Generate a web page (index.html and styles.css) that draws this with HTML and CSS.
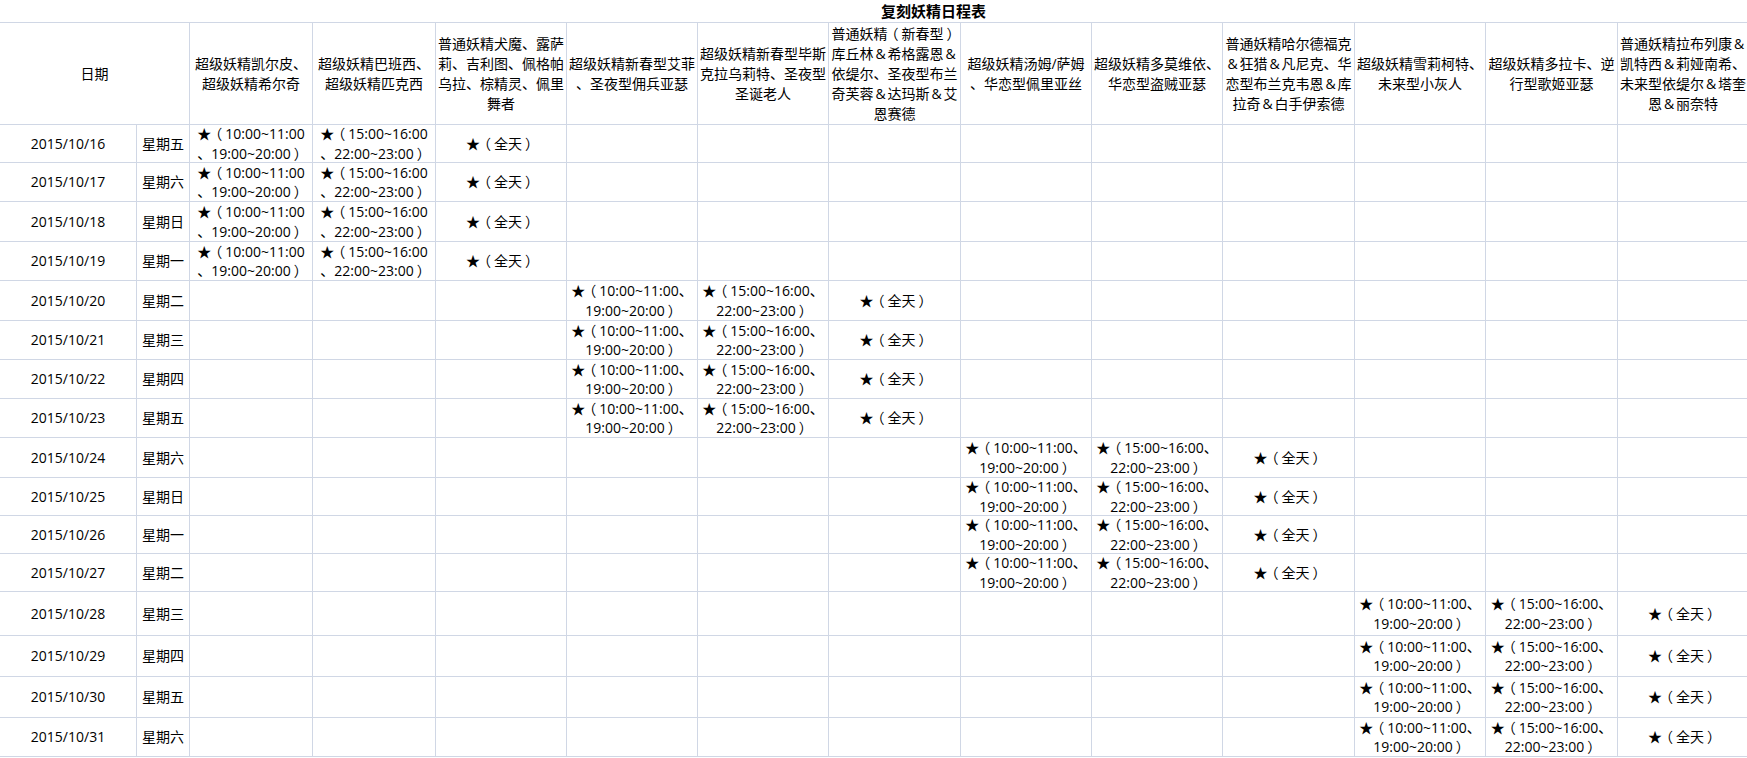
FILE: index.html
```html
<!DOCTYPE html>
<html lang="zh-CN">
<head>
<meta charset="utf-8">
<title>复刻妖精日程表</title>
<link rel="stylesheet" href="styles.css">
</head>
<body>
<div class="sheet">
  <div class="title">复刻妖精日程表</div>

  <div class="h h-date"><div class="t">日期</div></div>
  <div class="h"><div class="t">超级妖精凯尔皮、<br>超级妖精希尔奇</div></div>
  <div class="h"><div class="t">超级妖精巴班西、<br>超级妖精匹克西</div></div>
  <div class="h"><div class="t">普通妖精犬魔、露萨<br>莉、吉利图、佩格帕<br>乌拉、棕精灵、佩里<br>舞者</div></div>
  <div class="h"><div class="t">超级妖精新春型艾菲<br>、圣夜型佣兵亚瑟</div></div>
  <div class="h"><div class="t">超级妖精新春型毕斯<br>克拉乌莉特、圣夜型<br>圣诞老人</div></div>
  <div class="h"><div class="t">普通妖精<span class="po">（</span>新春型<span class="pc">）</span><br>库丘林<span class="amp">&amp;</span>希格露恩<span class="amp">&amp;</span><br>依缇尔、圣夜型布兰<br>奇芙蓉<span class="amp">&amp;</span>达玛斯<span class="amp">&amp;</span>艾<br>恩赛德</div></div>
  <div class="h"><div class="t">超级妖精汤姆/萨姆<br>、华恋型佩里亚丝</div></div>
  <div class="h"><div class="t">超级妖精多莫维依、<br>华恋型盗贼亚瑟</div></div>
  <div class="h"><div class="t">普通妖精哈尔德福克<br><span class="amp">&amp;</span>狂猎<span class="amp">&amp;</span>凡尼克、华<br>恋型布兰克韦恩<span class="amp">&amp;</span>库<br>拉奇<span class="amp">&amp;</span>白手伊索德</div></div>
  <div class="h"><div class="t">超级妖精雪莉柯特、<br>未来型小灰人</div></div>
  <div class="h"><div class="t">超级妖精多拉卡、逆<br>行型歌姬亚瑟</div></div>
  <div class="h"><div class="t">普通妖精拉布列康<span class="amp">&amp;</span><br>凯特西<span class="amp">&amp;</span>莉娅南希、<br>未来型依缇尔<span class="amp">&amp;</span>塔奎<br>恩<span class="amp">&amp;</span>丽奈特</div></div>

  <!-- 10/16 -->
  <div class="c">2015/10/16</div><div class="c">星期五</div>
  <div class="c"><div class="t">★<span class="po">（</span>10:00~11:00<br>、19:00~20:00<span class="pc">）</span></div></div>
  <div class="c"><div class="t">★<span class="po">（</span>15:00~16:00<br>、22:00~23:00<span class="pc">）</span></div></div>
  <div class="c"><div class="t">★<span class="po">（</span>全天<span class="pc">）</span></div></div>
  <div class="c"></div><div class="c"></div><div class="c"></div><div class="c"></div><div class="c"></div><div class="c"></div><div class="c"></div><div class="c"></div><div class="c"></div>

  <!-- 10/17 -->
  <div class="c">2015/10/17</div><div class="c">星期六</div>
  <div class="c"><div class="t">★<span class="po">（</span>10:00~11:00<br>、19:00~20:00<span class="pc">）</span></div></div>
  <div class="c"><div class="t">★<span class="po">（</span>15:00~16:00<br>、22:00~23:00<span class="pc">）</span></div></div>
  <div class="c"><div class="t">★<span class="po">（</span>全天<span class="pc">）</span></div></div>
  <div class="c"></div><div class="c"></div><div class="c"></div><div class="c"></div><div class="c"></div><div class="c"></div><div class="c"></div><div class="c"></div><div class="c"></div>

  <!-- 10/18 -->
  <div class="c">2015/10/18</div><div class="c">星期日</div>
  <div class="c"><div class="t">★<span class="po">（</span>10:00~11:00<br>、19:00~20:00<span class="pc">）</span></div></div>
  <div class="c"><div class="t">★<span class="po">（</span>15:00~16:00<br>、22:00~23:00<span class="pc">）</span></div></div>
  <div class="c"><div class="t">★<span class="po">（</span>全天<span class="pc">）</span></div></div>
  <div class="c"></div><div class="c"></div><div class="c"></div><div class="c"></div><div class="c"></div><div class="c"></div><div class="c"></div><div class="c"></div><div class="c"></div>

  <!-- 10/19 -->
  <div class="c">2015/10/19</div><div class="c">星期一</div>
  <div class="c"><div class="t">★<span class="po">（</span>10:00~11:00<br>、19:00~20:00<span class="pc">）</span></div></div>
  <div class="c"><div class="t">★<span class="po">（</span>15:00~16:00<br>、22:00~23:00<span class="pc">）</span></div></div>
  <div class="c"><div class="t">★<span class="po">（</span>全天<span class="pc">）</span></div></div>
  <div class="c"></div><div class="c"></div><div class="c"></div><div class="c"></div><div class="c"></div><div class="c"></div><div class="c"></div><div class="c"></div><div class="c"></div>

  <!-- 10/20 -->
  <div class="c">2015/10/20</div><div class="c">星期二</div>
  <div class="c"></div><div class="c"></div><div class="c"></div>
  <div class="c"><div class="t">★<span class="po">（</span>10:00~11:00、<br>19:00~20:00<span class="pc">）</span></div></div>
  <div class="c"><div class="t">★<span class="po">（</span>15:00~16:00、<br>22:00~23:00<span class="pc">）</span></div></div>
  <div class="c"><div class="t">★<span class="po">（</span>全天<span class="pc">）</span></div></div>
  <div class="c"></div><div class="c"></div><div class="c"></div><div class="c"></div><div class="c"></div><div class="c"></div>

  <!-- 10/21 -->
  <div class="c">2015/10/21</div><div class="c">星期三</div>
  <div class="c"></div><div class="c"></div><div class="c"></div>
  <div class="c"><div class="t">★<span class="po">（</span>10:00~11:00、<br>19:00~20:00<span class="pc">）</span></div></div>
  <div class="c"><div class="t">★<span class="po">（</span>15:00~16:00、<br>22:00~23:00<span class="pc">）</span></div></div>
  <div class="c"><div class="t">★<span class="po">（</span>全天<span class="pc">）</span></div></div>
  <div class="c"></div><div class="c"></div><div class="c"></div><div class="c"></div><div class="c"></div><div class="c"></div>

  <!-- 10/22 -->
  <div class="c">2015/10/22</div><div class="c">星期四</div>
  <div class="c"></div><div class="c"></div><div class="c"></div>
  <div class="c"><div class="t">★<span class="po">（</span>10:00~11:00、<br>19:00~20:00<span class="pc">）</span></div></div>
  <div class="c"><div class="t">★<span class="po">（</span>15:00~16:00、<br>22:00~23:00<span class="pc">）</span></div></div>
  <div class="c"><div class="t">★<span class="po">（</span>全天<span class="pc">）</span></div></div>
  <div class="c"></div><div class="c"></div><div class="c"></div><div class="c"></div><div class="c"></div><div class="c"></div>

  <!-- 10/23 -->
  <div class="c">2015/10/23</div><div class="c">星期五</div>
  <div class="c"></div><div class="c"></div><div class="c"></div>
  <div class="c"><div class="t">★<span class="po">（</span>10:00~11:00、<br>19:00~20:00<span class="pc">）</span></div></div>
  <div class="c"><div class="t">★<span class="po">（</span>15:00~16:00、<br>22:00~23:00<span class="pc">）</span></div></div>
  <div class="c"><div class="t">★<span class="po">（</span>全天<span class="pc">）</span></div></div>
  <div class="c"></div><div class="c"></div><div class="c"></div><div class="c"></div><div class="c"></div><div class="c"></div>

  <!-- 10/24 -->
  <div class="c">2015/10/24</div><div class="c">星期六</div>
  <div class="c"></div><div class="c"></div><div class="c"></div><div class="c"></div><div class="c"></div><div class="c"></div>
  <div class="c"><div class="t">★<span class="po">（</span>10:00~11:00、<br>19:00~20:00<span class="pc">）</span></div></div>
  <div class="c"><div class="t">★<span class="po">（</span>15:00~16:00、<br>22:00~23:00<span class="pc">）</span></div></div>
  <div class="c"><div class="t">★<span class="po">（</span>全天<span class="pc">）</span></div></div>
  <div class="c"></div><div class="c"></div><div class="c"></div>

  <!-- 10/25 -->
  <div class="c">2015/10/25</div><div class="c">星期日</div>
  <div class="c"></div><div class="c"></div><div class="c"></div><div class="c"></div><div class="c"></div><div class="c"></div>
  <div class="c"><div class="t">★<span class="po">（</span>10:00~11:00、<br>19:00~20:00<span class="pc">）</span></div></div>
  <div class="c"><div class="t">★<span class="po">（</span>15:00~16:00、<br>22:00~23:00<span class="pc">）</span></div></div>
  <div class="c"><div class="t">★<span class="po">（</span>全天<span class="pc">）</span></div></div>
  <div class="c"></div><div class="c"></div><div class="c"></div>

  <!-- 10/26 -->
  <div class="c">2015/10/26</div><div class="c">星期一</div>
  <div class="c"></div><div class="c"></div><div class="c"></div><div class="c"></div><div class="c"></div><div class="c"></div>
  <div class="c"><div class="t">★<span class="po">（</span>10:00~11:00、<br>19:00~20:00<span class="pc">）</span></div></div>
  <div class="c"><div class="t">★<span class="po">（</span>15:00~16:00、<br>22:00~23:00<span class="pc">）</span></div></div>
  <div class="c"><div class="t">★<span class="po">（</span>全天<span class="pc">）</span></div></div>
  <div class="c"></div><div class="c"></div><div class="c"></div>

  <!-- 10/27 -->
  <div class="c">2015/10/27</div><div class="c">星期二</div>
  <div class="c"></div><div class="c"></div><div class="c"></div><div class="c"></div><div class="c"></div><div class="c"></div>
  <div class="c"><div class="t">★<span class="po">（</span>10:00~11:00、<br>19:00~20:00<span class="pc">）</span></div></div>
  <div class="c"><div class="t">★<span class="po">（</span>15:00~16:00、<br>22:00~23:00<span class="pc">）</span></div></div>
  <div class="c"><div class="t">★<span class="po">（</span>全天<span class="pc">）</span></div></div>
  <div class="c"></div><div class="c"></div><div class="c"></div>

  <!-- 10/28 -->
  <div class="c">2015/10/28</div><div class="c">星期三</div>
  <div class="c"></div><div class="c"></div><div class="c"></div><div class="c"></div><div class="c"></div><div class="c"></div><div class="c"></div><div class="c"></div><div class="c"></div>
  <div class="c"><div class="t">★<span class="po">（</span>10:00~11:00、<br>19:00~20:00<span class="pc">）</span></div></div>
  <div class="c"><div class="t">★<span class="po">（</span>15:00~16:00、<br>22:00~23:00<span class="pc">）</span></div></div>
  <div class="c"><div class="t">★<span class="po">（</span>全天<span class="pc">）</span></div></div>

  <!-- 10/29 -->
  <div class="c">2015/10/29</div><div class="c">星期四</div>
  <div class="c"></div><div class="c"></div><div class="c"></div><div class="c"></div><div class="c"></div><div class="c"></div><div class="c"></div><div class="c"></div><div class="c"></div>
  <div class="c"><div class="t">★<span class="po">（</span>10:00~11:00、<br>19:00~20:00<span class="pc">）</span></div></div>
  <div class="c"><div class="t">★<span class="po">（</span>15:00~16:00、<br>22:00~23:00<span class="pc">）</span></div></div>
  <div class="c"><div class="t">★<span class="po">（</span>全天<span class="pc">）</span></div></div>

  <!-- 10/30 -->
  <div class="c">2015/10/30</div><div class="c">星期五</div>
  <div class="c"></div><div class="c"></div><div class="c"></div><div class="c"></div><div class="c"></div><div class="c"></div><div class="c"></div><div class="c"></div><div class="c"></div>
  <div class="c"><div class="t">★<span class="po">（</span>10:00~11:00、<br>19:00~20:00<span class="pc">）</span></div></div>
  <div class="c"><div class="t">★<span class="po">（</span>15:00~16:00、<br>22:00~23:00<span class="pc">）</span></div></div>
  <div class="c"><div class="t">★<span class="po">（</span>全天<span class="pc">）</span></div></div>

  <!-- 10/31 -->
  <div class="c">2015/10/31</div><div class="c">星期六</div>
  <div class="c"></div><div class="c"></div><div class="c"></div><div class="c"></div><div class="c"></div><div class="c"></div><div class="c"></div><div class="c"></div><div class="c"></div>
  <div class="c"><div class="t">★<span class="po">（</span>10:00~11:00、<br>19:00~20:00<span class="pc">）</span></div></div>
  <div class="c"><div class="t">★<span class="po">（</span>15:00~16:00、<br>22:00~23:00<span class="pc">）</span></div></div>
  <div class="c"><div class="t">★<span class="po">（</span>全天<span class="pc">）</span></div></div>
</div>
</body>
</html>
```

FILE: styles.css
```css
html, body {
  margin: 0;
  padding: 0;
  background: #ffffff;
  overflow: hidden;
}

body {
  font-family: "Open Sans", "Noto Sans CJK SC", sans-serif;
  font-size: 14px;
  color: #000000;
}

.sheet {
  display: grid;
  grid-template-columns: 137px 53px 123px 123px 131px 131px 131px 132px 131px 131px 132px 131px 132px 131px;
  grid-template-rows:
    23px 102px
    38px 39px 40px 39px 40px 39px 39px 39px
    40px 38px 38px 38px 44px 41px 41px 39px;
  width: 1748px;
}

.title {
  grid-column: 1 / -1;
  box-sizing: border-box;
  border-bottom: 1px solid #d0d7e5;
  padding-left: 881px;
  display: flex;
  align-items: center;
  font-family: "Noto Sans CJK SC", sans-serif;
  font-weight: bold;
  font-size: 15px;
  line-height: 20px;
  white-space: nowrap;
}

.h,
.c {
  box-sizing: border-box;
  border-right: 1px solid #d0d7e5;
  border-bottom: 1px solid #d0d7e5;
  display: flex;
  align-items: center;
  justify-content: center;
  text-align: center;
  overflow: hidden;
  white-space: nowrap;
}

.h {
  line-height: 20px;
}

.t {
  text-align: center;
}

.h-date {
  grid-column: span 2;
}

.c {
  line-height: 19.3px;
}

.amp {
  display: inline-block;
  width: 14px;
  text-align: center;
}

/* full-width parentheses: centre the glyph inside its em box */
.po {
  margin-left: -3px;
  margin-right: 3px;
}

.pc {
  margin-left: 3px;
  margin-right: -3px;
}
```
